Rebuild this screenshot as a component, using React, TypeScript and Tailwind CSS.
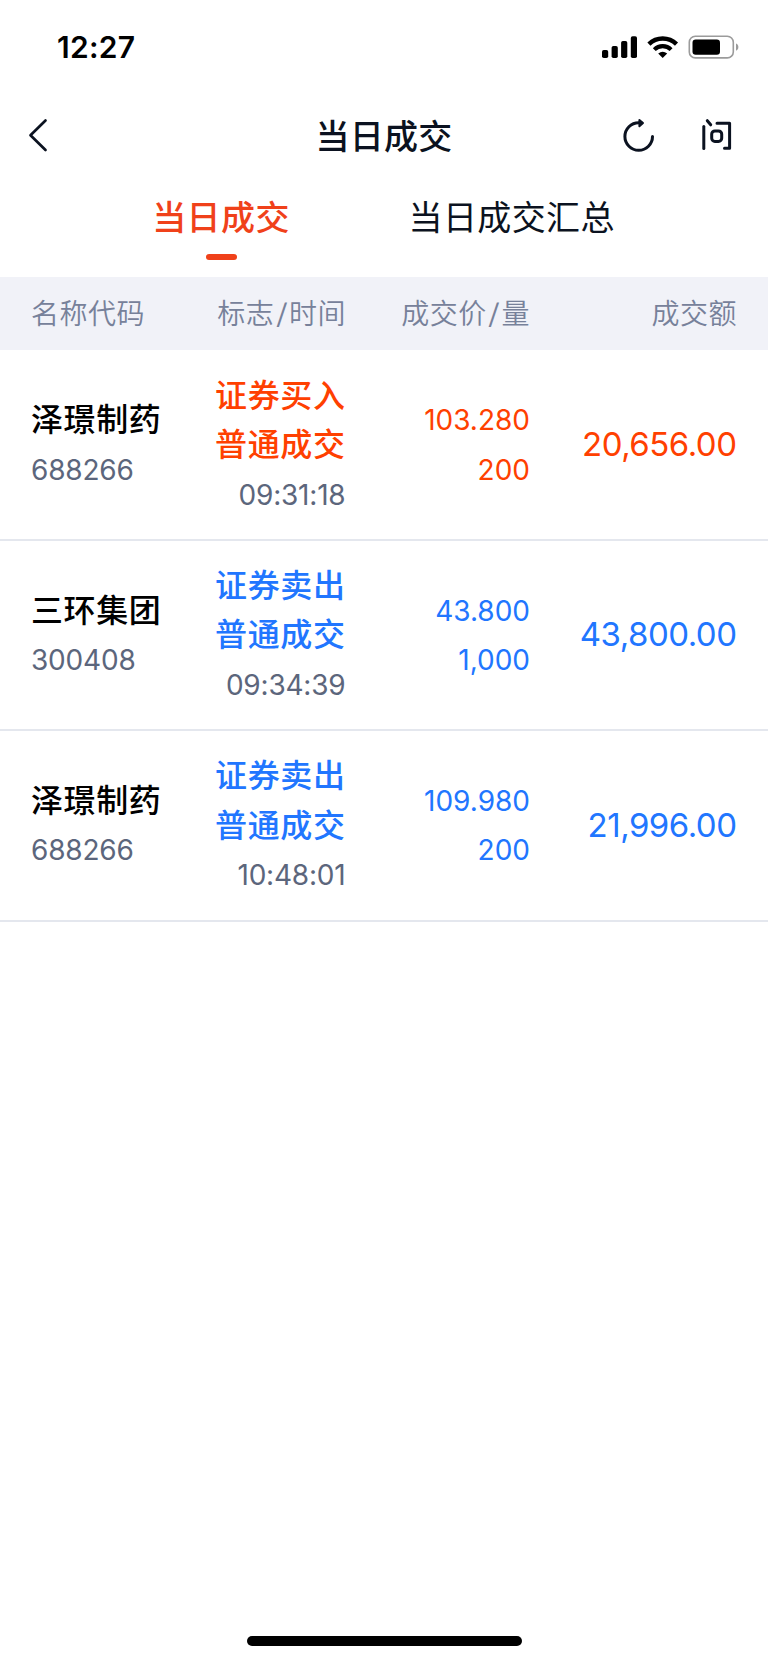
import React from "react";

type Trade = {
  name: string;
  code: string;
  side: string;
  kind: string;
  time: string;
  price: string;
  volume: string;
  amount: string;
  buy: boolean;
};

const trades: Trade[] = [
  { name: "泽璟制药", code: "688266", side: "证券买入", kind: "普通成交", time: "09:31:18", price: "103.280", volume: "200", amount: "20,656.00", buy: true },
  { name: "三环集团", code: "300408", side: "证券卖出", kind: "普通成交", time: "09:34:39", price: "43.800", volume: "1,000", amount: "43,800.00", buy: false },
  { name: "泽璟制药", code: "688266", side: "证券卖出", kind: "普通成交", time: "10:48:01", price: "109.980", volume: "200", amount: "21,996.00", buy: false },
];

function StatusBar() {
  return (
    <div className="flex h-[94px] items-center justify-between pl-[57px] pr-[29px]">
      <span className="text-[30px] leading-none font-semibold tracking-[0.3px] text-black">12:27</span>
      <svg width="138" height="24" viewBox="601 35 138 24" fill="none">
        <g fill="#000">
          <rect x="602" y="50" width="6.2" height="8" rx="1.8" />
          <rect x="611.6" y="46" width="6.2" height="12" rx="1.8" />
          <rect x="621.1" y="41" width="6.2" height="17" rx="1.8" />
          <rect x="630.8" y="36.2" width="6.2" height="21.8" rx="1.8" />
          <path d="M662.7 58 L658.2 53.6 Q662.7 49.8 667.2 53.6 Z" />
        </g>
        <path d="M648.9 44.1 A19.8 19.8 0 0 1 676.5 44.1" stroke="#000" strokeWidth="4.4" />
        <path d="M654.3 49.6 A12 12 0 0 1 671.1 49.6" stroke="#000" strokeWidth="4.1" />
        <rect x="689.3" y="36.3" width="44" height="21.6" rx="6" stroke="#9b9b9b" strokeWidth="1.6" />
        <rect x="692.5" y="39.5" width="27.5" height="15.3" rx="3.2" fill="#000" />
        <path d="M736 43.5 C739.2 44.6 739.2 49.6 736 50.7 Z" fill="#9b9b9b" />
      </svg>
    </div>
  );
}

function NavBar() {
  return (
    <div className="grid h-[84px] grid-cols-[1fr_auto_1fr] items-center pr-[31px] pb-[2px] pl-[31px]">
      <svg className="-ml-[3px]" width="22" height="36" viewBox="28 117 22 36" fill="none" stroke="#0b1220" strokeWidth="2.7" strokeLinecap="round" strokeLinejoin="round">
        <path d="M45.5 120.5 L30.5 135.2 L45.5 150" />
      </svg>
      <h1 className="pt-[4px] text-[34px] leading-[78px] font-medium tracking-[0.3px] text-[#0b1220]">当日成交</h1>
      <svg className="mr-[3px] justify-self-end" width="114" height="40" viewBox="620 115 114 40" fill="none" stroke="#0b1220" strokeWidth="3" strokeLinecap="round" strokeLinejoin="round">
        <path d="M652.5 136.5 A13.8 13.8 0 1 1 638.7 122.7 H641" />
        <path d="M639.4 119.9 L643 122.9 L639.4 126.2 Z" fill="#0b1220" strokeWidth="2" />
        <path d="M703.8 126.5 V148.5" />
        <path d="M707.3 120.7 L710.7 124.8" />
        <path d="M717 123.3 H729.6 V148.3 H724.5" />
        <rect x="711.7" y="130.9" width="10" height="10.6" rx="3.2" />
      </svg>
    </div>
  );
}

function Tabs() {
  return (
    <div className="flex h-[99px] pl-[152px]">
      <div className="flex w-[138px] flex-col items-center">
        <span className="pt-px text-[34px] leading-[78px] font-medium tracking-[0.4px] whitespace-nowrap text-[#f0411a]">当日成交</span>
        <span className="-mt-[3px] h-[6px] w-[31px] rounded-full bg-[#f0411a]" />
      </div>
      <div className="ml-[118.5px] pt-px">
        <span className="text-[34px] leading-[78px] tracking-[0.4px] whitespace-nowrap text-[#0b1220]">当日成交汇总</span>
      </div>
    </div>
  );
}

function PairLabel({ left, right }: { left: string; right: string }) {
  return (
    <span>
      {left}
      <span className="mr-[2px] ml-[2.5px] inline-block scale-x-125">/</span>
      {right}
    </span>
  );
}

function TableHead() {
  return (
    <div className="grid h-[73px] grid-cols-[165px_150px_184px_207px] items-center bg-[#f1f2f8] pl-[31px] text-right text-[28px] font-[350] tracking-[0.5px] text-[#77819a]">
      <span className="text-left">名称代码</span>
      <PairLabel left="标志" right="时间" />
      <PairLabel left="成交价" right="量" />
      <span>成交额</span>
    </div>
  );
}

function TradeRow({ trade }: { trade: Trade }) {
  const color = trade.buy ? "text-[#ff4000]" : "text-[#2176ff]";
  return (
    <div className="grid h-[190.3px] grid-cols-[165px_149.5px_184.5px_206.5px] items-center border-b-2 border-[#e4e7ee] pl-[31px] text-right text-[28px] leading-[49.4px]">
      <div className="text-left">
        <div className="text-[32px] font-medium tracking-[0.6px] text-black">{trade.name}</div>
        <div className="pt-px leading-[48.4px] tracking-[-0.2px] text-[#5c667c]">{trade.code}</div>
      </div>
      <div>
        <div className={`text-[32px] font-medium tracking-[0.6px] ${color}`}>{trade.side}</div>
        <div className={`text-[32px] font-medium tracking-[0.6px] ${color}`}>{trade.kind}</div>
        <div className="pt-px leading-[48.4px] tracking-[-0.2px] text-[#5c667c]">{trade.time}</div>
      </div>
      <div className={`pt-[2px] ${color}`}>
        <div>{trade.price}</div>
        <div>{trade.volume}</div>
      </div>
      <div className={`text-[33px] tracking-[-0.5px] ${color}`}>{trade.amount}</div>
    </div>
  );
}

export default function App() {
  return (
    <div className="flex h-[1663px] w-[768px] flex-col bg-white font-['Inter','Noto_Sans_CJK_SC',sans-serif]">
      <StatusBar />
      <NavBar />
      <Tabs />
      <TableHead />
      <main className="flex-1 pt-[0.7px]">
        {trades.map((trade, i) => (
          <TradeRow key={i} trade={trade} />
        ))}
      </main>
      <div className="mb-[17px] ml-[247px] h-[10px] w-[275px] rounded-full bg-black" />
    </div>
  );
}
